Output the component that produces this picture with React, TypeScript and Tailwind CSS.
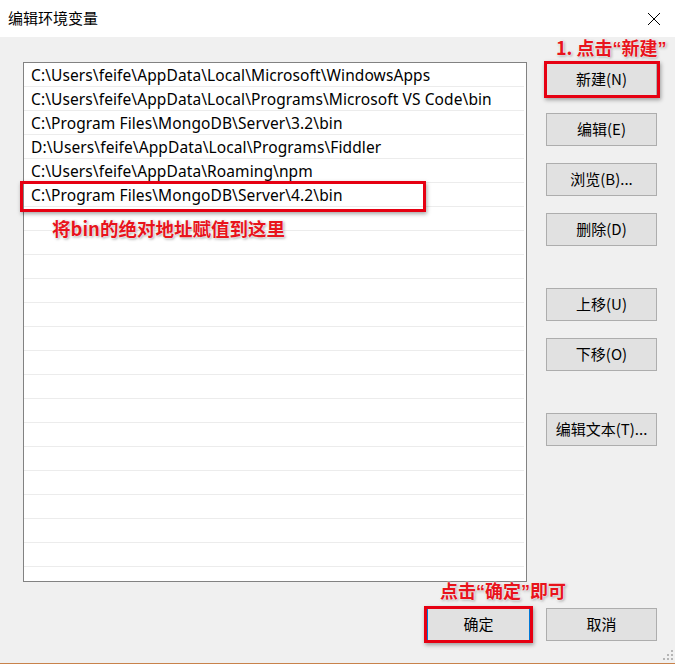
import React from 'react';

const paths = [
    'C:\\Users\\feife\\AppData\\Local\\Microsoft\\WindowsApps',
    'C:\\Users\\feife\\AppData\\Local\\Programs\\Microsoft VS Code\\bin',
    'C:\\Program Files\\MongoDB\\Server\\3.2\\bin',
    'D:\\Users\\feife\\AppData\\Local\\Programs\\Fiddler',
    'C:\\Users\\feife\\AppData\\Roaming\\npm',
    'C:\\Program Files\\MongoDB\\Server\\4.2\\bin',
];

const rows = [...paths, ...Array(15).fill('')];

const ui = { fontFamily: '"Noto Sans", "Noto Sans CJK SC", sans-serif' };
const cjk = { fontFamily: '"Noto Sans CJK SC", "Noto Sans", sans-serif' };
const latin = { fontFamily: '"Liberation Sans", sans-serif' };

const note = "absolute font-bold text-[#e8141c] leading-none whitespace-nowrap [text-shadow:0_0_2px_#fff,0_0_2px_#fff,1px_1px_3px_#888]";
const redBox = "absolute border-[3px] border-[#e60012] shadow-[1px_2px_4px_rgba(0,0,0,0.35)] pointer-events-none";

const Btn = ({ label, className = 'w-[111px] border-[#adadad]' }: { label: string; className?: string }) => (
    <div
        className={`h-[33px] flex items-center justify-center bg-[#e1e1e1] border text-[15px] text-black ${className}`}
        style={cjk}
    >
        {label}
    </div>
);

// quotes in the CJK font are full width, the screenshot has narrow ones
const Q = ({ c }: { c: string }) => <span style={latin}>{c}</span>;

const App: React.FC = () => {
    return (
        <div className="relative w-[675px] h-[664px] bg-[#f0f0f0] border-b border-[#c8824a] overflow-hidden">
            {/* title bar */}
            <div className="h-[37px] bg-white flex items-center justify-between pl-2 pr-[14px]">
                <span className="text-[15px] text-black" style={cjk}>编辑环境变量</span>
                <svg width="14" height="14" viewBox="0 0 14 14" className="text-black">
                    <path d="M1 1L13 13M13 1L1 13" stroke="currentColor" strokeWidth="1" />
                </svg>
            </div>

            <div className="flex pt-[25px]">
                {/* list */}
                <div className="ml-[23px] w-[504px] h-[520px] bg-white border border-[#828282] pr-[2px] overflow-hidden">
                    {rows.map((p, i) => (
                        <div
                            key={i}
                            className="h-6 border-b border-[#ececec] pl-[7px] pt-[2px] flex items-center text-[15.5px] tracking-[0.1px] text-black whitespace-nowrap"
                            style={ui}
                        >
                            {p}
                        </div>
                    ))}
                </div>

                {/* side buttons */}
                <div className="ml-[19px] flex flex-col pt-px gap-[17px]">
                    <Btn label="新建(N)" />
                    <Btn label="编辑(E)" />
                    <Btn label="浏览(B)..." />
                    <Btn label="删除(D)" />
                    <div className="h-[8px]" />
                    <Btn label="上移(U)" />
                    <Btn label="下移(O)" />
                    <div className="h-[8px]" />
                    <Btn label="编辑文本(T)..." />
                </div>
            </div>

            {/* bottom buttons */}
            <div className="flex justify-end gap-[16px] pr-[18px] pt-[26px]">
                <Btn label="确定" className="w-[103px] border-[#0078d7]" />
                <Btn label="取消" />
            </div>

            {/* resize grip */}
            <svg width="10" height="10" viewBox="0 0 10 10" className="absolute right-[2px] bottom-[3px]">
                {[[8, 0], [8, 4], [4, 4], [8, 8], [4, 8], [0, 8]].map(([x, y], i) => (
                    <rect key={i} x={x} y={y} width="2" height="2" fill="#b5b5b5" />
                ))}
            </svg>

            {/* annotations */}
            <div className={`${redBox} left-[20px] top-[181px] w-[406px] h-[31px]`} />
            <div className={`${redBox} left-[544px] top-[61px] w-[116px] h-[37px]`} />
            <div className={`${redBox} left-[424px] top-[606px] w-[109px] h-[37px]`} />

            <span className={`${note} left-[556px] top-[38px] text-[18px]`} style={cjk}>
                1. 点击<Q c="“" />新建<Q c="”" />
            </span>
            <span className={`${note} left-[52px] top-[219px] text-[18.5px]`} style={cjk}>将bin的绝对地址赋值到这里</span>
            <span className={`${note} left-[440px] top-[581px] text-[18px]`} style={cjk}>
                点击<Q c="“" />确定<Q c="”" />即可
            </span>
        </div>
    );
};

export default App;
